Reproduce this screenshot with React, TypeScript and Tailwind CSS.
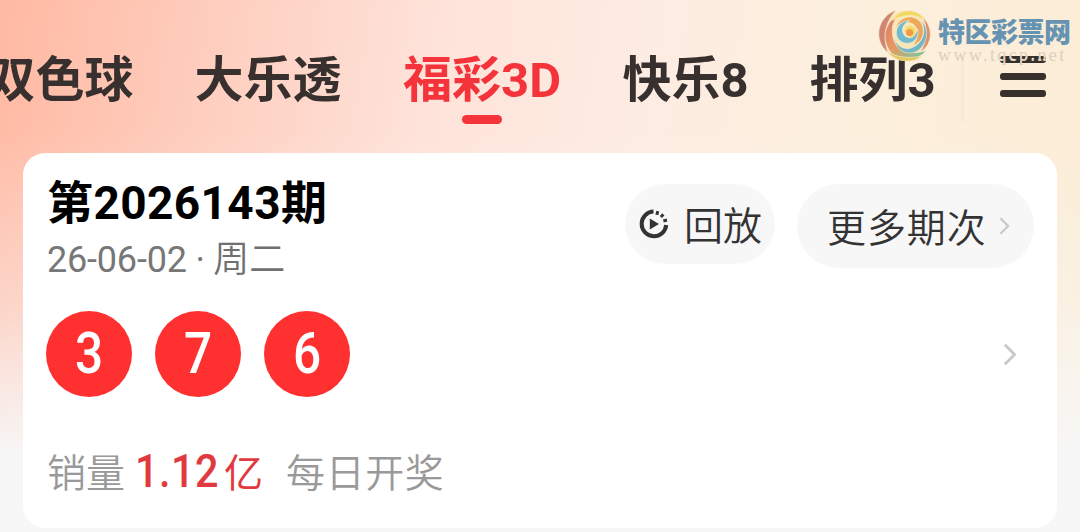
import type { ReactNode } from "react";

const tabs = [
  { label: "双色球", className: "ml-[-15px] w-[150px]" },
  { label: "大乐透", className: "ml-[58px] w-[150px]" },
  { label: "福彩3D", className: "ml-[58px] w-[162px]", active: true },
  { label: "快乐8", className: "ml-[58px] w-[129px]" },
  { label: "排列3", className: "ml-[58px] w-[129px]" },
];

const balls = [3, 7, 6];

export default function App() {
  return (
    <div className="relative h-[532px] w-[1080px] overflow-hidden bg-[linear-gradient(to_bottom,rgba(248,248,248,0)_24%,rgba(248,248,248,0.4)_58%,#f7f7f7_86%),linear-gradient(100deg,#ffb9a2_0%,#fecdbd_18%,#fee3da_38%,#fdece2_56%,#fcefdc_76%,#fbecd4_100%)] font-[Roboto,'Noto_Sans_CJK_SC',sans-serif]">
      <header className="flex h-[153px] items-start pt-[46px]">
        <nav className="flex">
          {tabs.map((tab) => (
            <Tab key={tab.label} {...tab} />
          ))}
        </nav>
        <span className="ml-[24px] mt-2 h-[68px] w-[3px] bg-[#f8e8d6]" />
        <button className="ml-[36px] mt-[10px] flex w-[46px] flex-col gap-[10px]" aria-label="菜单">
          <span className="h-[7px] rounded-[3px] bg-[#37312d]" />
          <span className="h-[7px] rounded-[3px] bg-[#37312d]" />
          <span className="h-[7px] rounded-[3px] bg-[#37312d]" />
        </button>
      </header>

      <main className="mx-[23px] flex h-[375px] flex-col rounded-[22px] bg-white pl-6 pr-[23px]">
        <div className="flex h-[130px] justify-between">
          <div className="pt-[18px]">
            <h1 className="whitespace-nowrap text-[46px] font-bold leading-[64px] tracking-[0.4px] text-black">
              第2026143期
            </h1>
            <p className="whitespace-nowrap text-[36px] font-[350] leading-[50px] text-[#707070]">
              <span className="font-normal tracking-[-0.2px] text-[#777]">26-06-02 · </span>周二
            </p>
          </div>
          <div className="flex items-start gap-[22px] pt-[31px]">
            <Pill className="h-[80px] w-[150px] pl-[14px]">
              <ReplayIcon />
              <span className="ml-[15px] pt-[7px]">回放</span>
            </Pill>
            <Pill className="h-[84px] w-[237px] pl-[30px]">
              <span className="pt-[6px] tracking-[0.9px]">更多期次</span>
              <Chevron className="ml-[12px] h-[18px] w-[11px]" />
            </Pill>
          </div>
        </div>

        <div className="mt-[28px] flex items-center">
          {balls.map((n) => (
            <span
              key={n}
              className="-ml-px mr-6 flex size-[86px] items-center justify-center rounded-full bg-[#ff3030] text-[57px] font-medium leading-none text-white"
            >
              <span className="scale-x-[0.87] pb-[2px]">{n}</span>
            </span>
          ))}
          <Chevron className="ml-auto mr-[17px] h-[23px] w-[14px]" />
        </div>

        <div className="mt-[45px] flex items-center whitespace-nowrap text-[39px] font-[350] leading-[58px] text-[#999]">
          <span>销量</span>
          <span className="mb-[5px] ml-[10px] w-[89px] origin-left scale-x-[0.88] text-[47px] font-medium tracking-[0.6px] text-[#e03a40]">
            1.12
          </span>
          <span className="font-normal text-[#e03a40]">亿</span>
          <span className="ml-[23px] tracking-[0.6px]">每日开奖</span>
        </div>
      </main>

      <Watermark />
    </div>
  );
}

function Tab({ label, className, active }: { label: string; className: string; active?: boolean }) {
  return (
    <div className={`flex shrink-0 flex-col items-center ${className}`}>
      <span
        className={`whitespace-nowrap text-[49px] font-bold leading-[69px] ${
          active ? "text-[#f5333a]" : "text-[#37302e]"
        }`}
      >
        {label}
      </span>
      {active && <span className="h-[9px] w-[40px] rounded-full bg-[#f5333a]" />}
    </div>
  );
}

function Pill({ className, children }: { className: string; children: ReactNode }) {
  return (
    <button
      className={`flex items-center whitespace-nowrap rounded-full bg-[#f7f7f7] text-[39px] font-[350] text-[#333] ${className}`}
    >
      {children}
    </button>
  );
}

function Chevron({ className }: { className: string }) {
  return (
    <svg className={className} viewBox="0 0 12 20" fill="none" stroke="#c8c8c8" strokeWidth="2.4">
      <path d="M1.5 1.5L10 10L1.5 18.5" />
    </svg>
  );
}

function ReplayIcon() {
  return (
    <svg width="30" height="30" viewBox="0 0 30 30" fill="none" stroke="#333" strokeWidth="4">
      <path d="M14.5 2.6A12.3 12.3 0 1 0 27.2 16" />
      <path d="M10.8 9.5L20 15L10.8 20.5Z" fill="#333" stroke="none" />
      <path d="M18.8 2.2L17.8 5.8M24.4 5.4L21.8 8M28 11L24.4 12" strokeWidth="3" />
    </svg>
  );
}

function Watermark() {
  return (
    <div className="absolute left-[878px] top-[9px] flex">
      <svg width="54" height="52" viewBox="1 1 53 51" stroke="#faeccd" strokeWidth="0.6">
        <defs>
          <linearGradient id="arm" x1="0" y1="0" x2="0.7" y2="1">
            <stop offset="0.2" stopColor="#df8468" />
            <stop offset="0.6" stopColor="#e59a62" />
            <stop offset="1" stopColor="#86c096" />
          </linearGradient>
        </defs>
        <circle cx="28" cy="26" r="23.5" fill="#f9e6b8" stroke="none" />
        <path d="M19 2C1 8-5 31 11 44C5 29 8 13 19 2Z" fill="#cf8571" />
        <path d="M22 6C5 15 4 35 16 46C28 54 42 50 48 42C34 46 22 43 17 33C13 22 15 13 22 6Z" fill="url(#arm)" />
        <path d="M10 43C19 54 35 55 44 47C31 50 19 48 10 43Z" fill="#e5c75f" />
        <path d="M15 12C23-1 41 0 48 13C38 5 27 6 15 12Z" fill="#f1d95f" />
        <path d="M45 9C56 20 54 36 43 43C49 32 50 20 45 9Z" fill="#e08e66" />
        <path d="M43 12C50 24 44 37 31 40C22 40 18 34 17 28C17 41 30 48 40 42C50 35 52 20 43 12Z" fill="#72b6c8" />
        <path d="M18 20C22 7 38 5 44 16C48 27 43 34 35 37C42 29 41 18 34 15C28 12 22 14 18 20Z" fill="#eea659" />
        <path d="M32 12C17 13 15 30 26 34C35 37 42 29 40 21C37 29 31 31 27 27C23 22 25 16 32 12Z" fill="#70bbcd" />
        <path d="M27 25C26 16 35 15 38 21C39 26 35 30 31 29C35 26 34 21 30 21Z" fill="#f4d866" />
        <circle cx="32" cy="24" r="3.5" fill="#f09a43" stroke="none" />
      </svg>
      <div className="ml-[6px] w-[142px] whitespace-nowrap">
        <div className="font-['Noto_Sans_CJK_SC',sans-serif] text-[27px] font-black leading-[43px] tracking-[-0.5px] text-[#6793b2]">
          特区彩票网
        </div>
        <div className="-mt-[5px] font-['Liberation_Serif',serif] text-[18px] leading-[16px] tracking-[2.4px] text-[#ddcfbf] [text-shadow:0_-1px_#fcefdc]">
          www.tqcp.net
        </div>
      </div>
    </div>
  );
}
